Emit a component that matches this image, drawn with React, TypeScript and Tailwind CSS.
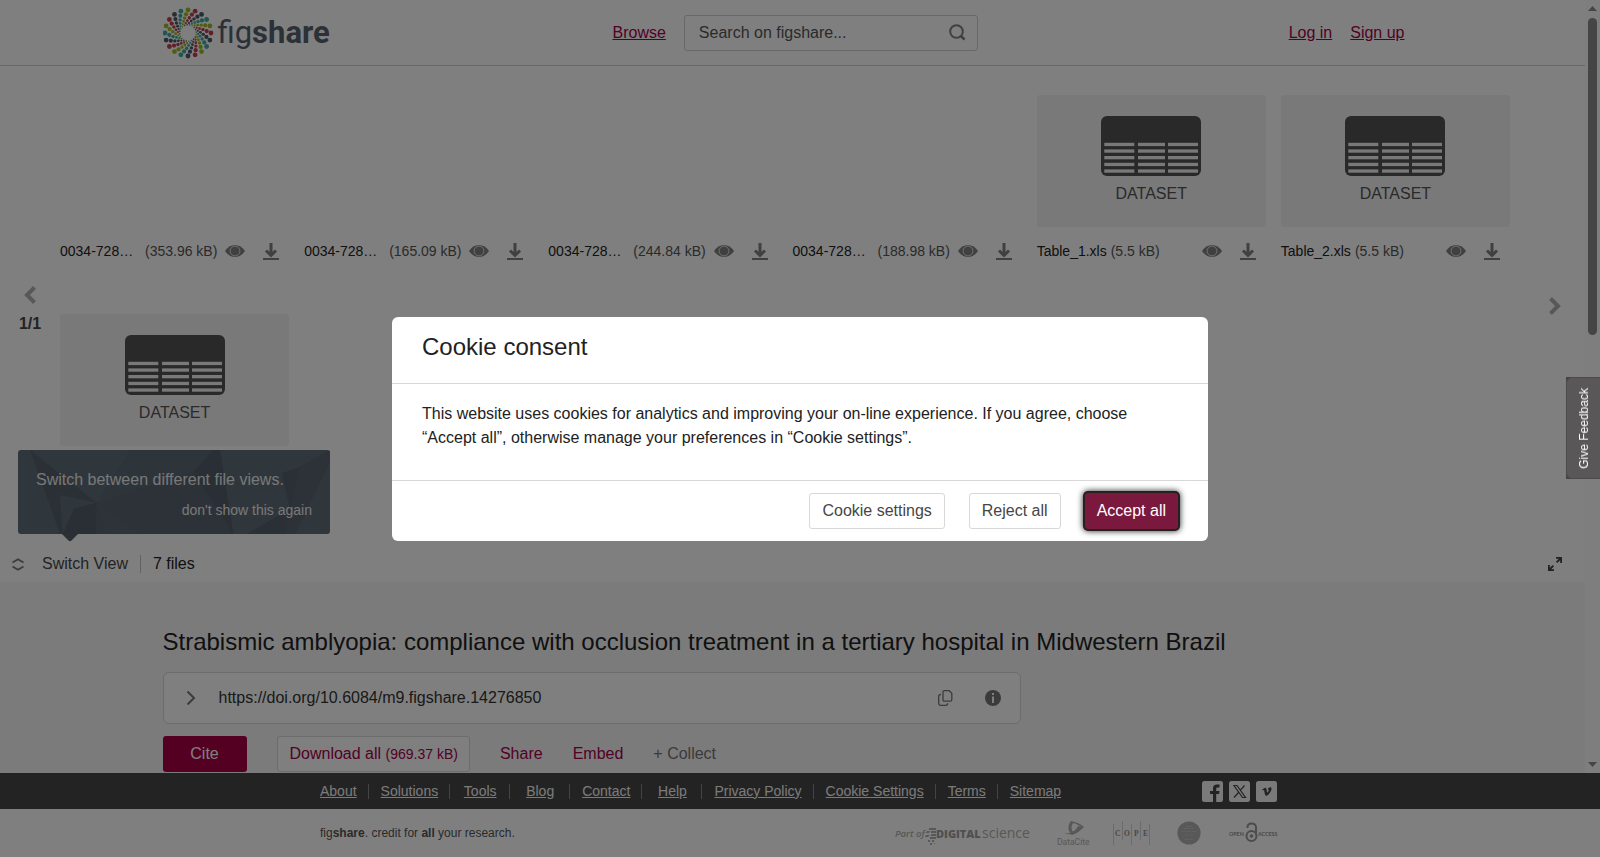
import { useState } from "react";
import type { ReactNode } from "react";

type FileItem = { name?: string; size?: string; dataset?: boolean; long?: boolean };

const files: FileItem[] = [
  { name: "0034-728…", size: "(353.96 kB)", long: true },
  { name: "0034-728…", size: "(165.09 kB)", long: true },
  { name: "0034-728…", size: "(244.84 kB)", long: true },
  { name: "0034-728…", size: "(188.98 kB)", long: true },
  { name: "Table_1.xls", size: "(5.5 kB)", dataset: true },
  { name: "Table_2.xls", size: "(5.5 kB)", dataset: true },
  { dataset: true },
];

const footerLinks = [
  "About",
  "Solutions",
  "Tools",
  "Blog",
  "Contact",
  "Help",
  "Privacy Policy",
  "Cookie Settings",
  "Terms",
  "Sitemap",
];

const dotColors = ["#9dbb1e", "#c43f50", "#4c5a6b", "#45aaa4"];
const dotRings = [
  { r: 23, size: 2.4, turn: 0 },
  { r: 18.8, size: 2.1, turn: -6 },
  { r: 15.3, size: 1.7, turn: -13 },
  { r: 12.4, size: 1.4, turn: -21 },
  { r: 10.1, size: 1.1, turn: -31 },
  { r: 8.3, size: 0.8, turn: -42 },
];

function Logo() {
  return (
    <a href="#" aria-label="figshare" className="flex items-center">
      <svg width="51" height="52" viewBox="-25 -26 51 52">
        {Array.from({ length: 20 }).map((_, i) =>
          dotRings.map((ring) => {
            const a = ((i * 18 + ring.turn - 90) * Math.PI) / 180;
            return (
              <circle
                key={`${i}-${ring.r}`}
                cx={ring.r * Math.cos(a)}
                cy={ring.r * Math.sin(a)}
                r={ring.size}
                fill={dotColors[i % 4]}
              />
            );
          })
        )}
      </svg>
      <span className="ml-1 font-['Roboto',sans-serif] text-[31px] leading-none text-[#56636f]">
        <span>fig</span>
        <span className="font-bold">share</span>
      </span>
    </a>
  );
}

function Header() {
  return (
    <header className="h-[66px] border-b border-[#d0d0d0]">
      <div className="max-w-[1260px] h-full mx-auto flex items-center pr-[18px]">
        <div className="w-[450px]">
          <Logo />
        </div>
        <a href="#" className="text-[#a6004a] underline">
          Browse
        </a>
        <form className="ml-[18px] w-[294px] h-9 flex items-center border border-[#d0d0d0] rounded-[3px] pl-3.5 pr-[11px]">
          <input
            type="text"
            aria-label="Search on figshare"
            placeholder="Search on figshare..."
            className="flex-1 min-w-0 bg-transparent focus:outline-none placeholder:text-[#555555]"
          />
          <button type="button" aria-label="Search">
            <svg width="17" height="17" viewBox="0 0 17 17" fill="none" stroke="#808080" strokeWidth="2">
              <circle cx="7.5" cy="7.5" r="6.3" />
              <path d="M12 12l3.6 3.6" strokeWidth="2.6" />
            </svg>
          </button>
        </form>
        <nav className="ml-auto flex gap-[18px] text-[#a6004a]">
          <a href="#" className="underline">
            Log in
          </a>
          <a href="#" className="underline">
            Sign up
          </a>
        </nav>
      </div>
    </header>
  );
}

function IconDataset() {
  const cols = [
    [3.3, 30],
    [37, 27],
    [67, 30],
  ];
  return (
    <svg width="100" height="60" viewBox="0 0 100 60">
      <rect width="100" height="60" rx="6" fill="#535353" />
      {[26.8, 33.4, 40, 46.8, 53.4].map((y) =>
        cols.map(([x, w]) => (
          <rect key={`${x}-${y}`} x={x} y={y} width={w} height="3.3" fill="#f3f3f3" />
        ))
      )}
    </svg>
  );
}

function IconEye() {
  return (
    <svg width="20" height="12" viewBox="0 0 20 12">
      <path d="M0 6C2.4 2.2 6 0 10 0s7.6 2.2 10 6c-2.4 3.8-6 6-10 6S2.4 9.8 0 6z" fill="#808080" />
      <circle cx="10" cy="6" r="4.9" fill="none" stroke="#f5f5f5" strokeWidth="0.8" />
    </svg>
  );
}

function IconDownload() {
  return (
    <svg width="16" height="17" viewBox="0 0 16 17" fill="none" stroke="#808080">
      <path d="M8 0v12M3 7.5l5 5 5-5" strokeWidth="3" />
      <path d="M0 16h16" strokeWidth="2" />
    </svg>
  );
}

function Arrow({ left }: { left?: boolean }) {
  return (
    <svg width="12" height="18" viewBox="0 0 12 18" fill="none" stroke="#b0b0b0" strokeWidth="4">
      <path d={left ? "M10.5 1.5L3 9l7.5 7.5" : "M1.500 1.500L9 9l-7.500 7.500"} />
    </svg>
  );
}

function FileCard({ file }: { file: FileItem }) {
  return (
    <div>
      <div
        className={
          file.dataset
            ? "h-[132px] rounded-[3px] bg-[#f3f3f3] flex flex-col items-center pt-[21px]"
            : "h-[132px]"
        }
      >
        {file.dataset && (
          <>
            <IconDataset />
            <span className="mt-1.5 text-[#555555]">DATASET</span>
          </>
        )}
      </div>
      {file.name && (
        <div className="h-12 flex items-center pr-2.5 text-sm">
          <div className="flex flex-1 gap-1">
            <span className={file.long ? "w-[81px] text-[#222222]" : "text-[#222222]"}>
              {file.name}
            </span>
            <span className="text-[#555555]">{file.size}</span>
          </div>
          <button type="button" aria-label="Preview">
            <IconEye />
          </button>
          <button type="button" aria-label="Download" className="ml-[18px]">
            <IconDownload />
          </button>
        </div>
      )}
    </div>
  );
}

function ViewTip() {
  return (
    <div className="absolute left-[18px] bottom-full mb-3 w-[312px] h-[84px]">
      <svg
        className="absolute inset-0 rounded-[3px]"
        width="312"
        height="84"
        viewBox="54 30 936 252"
        preserveAspectRatio="none"
      >
        <rect x="54" y="30" width="936" height="252" fill="#5f6d79" />
        <path d="M90 30L290 188 180 165 188 282H180z" fill="#56616c" />
        <path d="M390 30L290 188 580 95 640 30z" fill="#5b6874" />
        <path d="M290 188L580 95 640 30h20l40 252H288z" fill="#58646f" />
        <path d="M580 95L640 30h20l40 252z" fill="#545f6a" />
        <path d="M290 188L222 205l-34 77h100z" fill="#545f6a" />
        <path d="M290 188l130 94H320z" fill="#5b6773" />
        <path d="M845 100L900 80l90-50v35L885 282H740l130-75z" fill="#56616c" />
        <path d="M900 80L855 282h30L990 65V30z" fill="#596571" />
      </svg>
      <svg className="absolute left-[44px] top-full" width="16" height="8" viewBox="0 0 16 8">
        <path d="M0 0h16L9.5 6.5q-1.5 1.5-3 0z" fill="#56616c" />
      </svg>
      <div className="relative px-[18px] pt-[18px] text-[#f0f0f0]">
        <p>Switch between different file views.</p>
        <p className="mt-2 text-right text-sm">
          <button type="button">don't show this again</button>
        </p>
      </div>
    </div>
  );
}

function Viewer() {
  return (
    <section>
      <div className="flex items-center">
        <div className="w-[60px] pt-2.5 flex flex-col items-center gap-2">
          <button type="button" aria-label="Previous">
            <Arrow left />
          </button>
          <span className="font-bold text-[#464646]">1/1</span>
        </div>
        <div className="flex-1 grid grid-cols-6 gap-x-[15px] gap-y-[39px] pt-[29px] pb-[100px]">
          {files.map((file, i) => (
            <FileCard key={i} file={file} />
          ))}
        </div>
        <div className="w-[75px] flex justify-center pl-[15px]">
          <button type="button" aria-label="Next">
            <Arrow />
          </button>
        </div>
      </div>
      <div className="relative h-9 flex items-center pl-3 pr-[23px]">
        <ViewTip />
        <button type="button" className="flex items-center text-[#464646]">
          <svg width="12" height="13" viewBox="0 0 12 13" fill="none" stroke="#777777" strokeWidth="1.7">
            <path d="M0.5 4.5L6 1.2l5.5 3.3M0.500 8.500L6 11.800l5.500-3.300" />
          </svg>
          <span className="ml-[18px]">Switch View</span>
        </button>
        <span className="ml-3 mr-3 w-px h-[18px] bg-[#c4c4c4]" />
        <span className="text-[#222222]">7 files</span>
        <button type="button" aria-label="Fullscreen" className="ml-auto">
          <svg width="14" height="14" viewBox="0 0 14 14" fill="#464646">
            <path d="M8 0h6v6h-1.8V3.200L9.300 6.100 7.900 4.700 10.800 1.800H8z" />
            <path d="M10 .5h3.500V4z" />
            <path d="M6 14H0V8h1.800v2.800L4.700 7.900l1.400 1.400-2.900 2.900H6z" />
            <path d="M4 13.500H.5V10z" />
          </svg>
        </button>
      </div>
    </section>
  );
}

function Details() {
  return (
    <section className="flex-1 bg-[#f7f7f7]">
      <div className="max-w-[1260px] mx-auto pt-11">
        <h1 className="text-2xl leading-8 text-[#222222]">
          Strabismic amblyopia: compliance with occlusion treatment in a tertiary hospital in
          Midwestern Brazil
        </h1>
        <div className="mt-[14px] max-w-[858px] h-[52px] bg-white border border-[#d8d8d8] rounded-md flex items-center pl-[22px] pr-[19px]">
          <button type="button" aria-label="Expand">
            <svg width="10" height="16" viewBox="0 0 10 16" fill="none" stroke="#777777" strokeWidth="2">
              <path d="M1.5 1.5L8 8l-6.5 6.5" />
            </svg>
          </button>
          <span className="ml-[23px] text-[#333333]">https://doi.org/10.6084/m9.figshare.14276850</span>
          <button type="button" aria-label="Copy" className="ml-auto">
            <svg width="15" height="16" viewBox="0 0 15 16" fill="none" stroke="#777777" strokeWidth="1.3">
              <path d="M6.500 0.700h4.700l2.600 2.600v6.400q0 1.500-1.500 1.500H6.500q-1.500 0-1.500-1.500V2.200q0-1.500 1.500-1.500z" />
              <path d="M3 4.500q-2.300 0-2.300 2v7q0 1.800 1.800 1.800h5.200q2 0 2-2" />
            </svg>
          </button>
          <button type="button" aria-label="Info" className="ml-8">
            <svg width="16" height="16" viewBox="0 0 16 16">
              <circle cx="8" cy="8" r="8" fill="#777777" />
              <path d="M7 3h2v2H7zM7 6.500h2V13H7z" fill="#fff" />
            </svg>
          </button>
        </div>
        <div className="mt-3 flex items-center text-[#a6004a]">
          <button type="button" className="w-[84px] h-9 rounded-[3px] bg-[#a60046] text-white">
            Cite
          </button>
          <button
            type="button"
            className="ml-[30px] h-9 pl-3 pr-[11px] rounded-[3px] bg-white border border-[#d8d8d8]"
          >
            Download all <span className="text-sm">(969.37 kB)</span>
          </button>
          <button type="button" className="ml-[30px]">
            Share
          </button>
          <button type="button" className="ml-[30px]">
            Embed
          </button>
          <button type="button" className="ml-[30px] text-[#757575]">
            + Collect
          </button>
        </div>
      </div>
    </section>
  );
}

function Scrollbar() {
  return (
    <div className="w-[15px] bg-[#fcfcfc] flex flex-col items-center py-1.5">
      <svg width="9" height="5" viewBox="0 0 9 5">
        <path d="M4.5 0L9 5H0z" fill="#8b8b8b" />
      </svg>
      <div className="mt-[7px] w-[9px] h-[317px] rounded-full bg-[#8b8b8b]" />
      <svg className="mt-auto" width="9" height="5" viewBox="0 0 9 5">
        <path d="M4.5 5L9 0H0z" fill="#8b8b8b" />
      </svg>
    </div>
  );
}

function SocialLink({ label, children }: { label: string; children: ReactNode }) {
  return (
    <a href="#" aria-label={label}>
      <svg width="21" height="21" viewBox="0 0 21 21">
        <rect width="21" height="21" rx="2.5" fill="#f5f5f5" />
        {children}
      </svg>
    </a>
  );
}

function PartnerLogos() {
  return (
    <div className="flex items-center text-[#b0b0b0]">
      <svg width="138" height="28" viewBox="0 0 138 28" fill="currentColor">
        <text x="0" y="18" fontFamily="Open Sans" fontSize="9.5" fontStyle="italic" fontWeight="600">
          Part of
        </text>
        <path d="M34 9h7v2h-7zM36 12h5v2h-5zM36 15h5v2h-5zM32 12h3l-1 2h-3zM31 16h4l-2 2h-3zM35 18h6v2h-6zM33 21h2v2h-2zM37 21h2v2h-2zM35 24h2v2h-2zM39 24h1v1h-1z" />
        <g fill="#a0a0a0">
          <text x="41" y="19" fontFamily="Open Sans" fontSize="11" fontWeight="800">
            DIGITAL
          </text>
        </g>
        <text x="87" y="19" fontFamily="Open Sans" fontSize="14">
          science
        </text>
      </svg>
      <svg className="ml-6" width="36" height="28" viewBox="0 0 36 28" fill="currentColor">
        <path
          d="M14 2c-4 5-3 10 1 14 6-2 10-6 12-8-3-3-8-5-13-6zm2 2c4 1 6 2 8 4-2 2-5 4-8 5-2-3-2-6 0-9z"
          fillRule="evenodd"
        />
        <path d="M7 14c6 1 11-1 14-7l4 1c-3 7-11 9-18 6z" />
        <text x="0" y="26" fontFamily="Roboto" fontSize="8.5">
          DataCite
        </text>
      </svg>
      <svg className="ml-5" width="37" height="26" viewBox="0 0 37 26" fill="currentColor">
        <path d="M0 4h1v21H0zM9 1h1v19H9zM18 4h1v21h-1zM27 1h1v19h-1zM36 4h1v21h-1z" opacity="0.5" />
        <g fill="#909090">
          <text y="16" fontFamily="Liberation Serif" fontSize="7.5" fontWeight="700">
            <tspan x="2">C</tspan>
            <tspan x="11">O</tspan>
            <tspan x="21">P</tspan>
            <tspan x="30">E</tspan>
          </text>
        </g>
      </svg>
      <svg className="ml-[27px]" width="24" height="24" viewBox="0 0 24 24">
        <circle cx="12" cy="12" r="11.6" fill="currentColor" />
        <path
          d="M9 5.500h6M7 7.500h10M5 10.500h14M8 14h8M8 18.500h8"
          stroke="#cccccc"
          strokeWidth="0.9"
          strokeDasharray="1.6 0.9"
        />
      </svg>
      <svg className="ml-7" width="51" height="24" viewBox="0 0 51 24" fill="#999999">
        <text x="0" y="15" fontFamily="Lato" fontSize="5.3" fontWeight="900">
          OPEN
        </text>
        <text x="29" y="15" fontFamily="Lato" fontSize="5.3" fontWeight="900">
          ACCESS
        </text>
        <g fill="none" stroke="#999999" strokeWidth="2">
          <circle cx="22.5" cy="15" r="5" />
          <path d="M18.500 7V6q0-3.500 4-3.500T27 6v8" />
        </g>
        <circle cx="22.5" cy="15" r="1.8" />
      </svg>
    </div>
  );
}

function Footer() {
  return (
    <footer>
      <div className="bg-[#464646]">
        <div className="max-w-[960px] h-9 mx-auto flex items-center text-sm text-[#f5f5f5]">
          <ul className="flex">
            {footerLinks.map((link, i) => (
              <li
                key={link}
                className={
                  i === 0
                    ? "h-[15px] pr-[11px] border-r border-[#868686] leading-[15px]"
                    : i === footerLinks.length - 1
                      ? "h-[15px] pl-3 leading-[15px]"
                      : "h-[15px] min-w-[60px] pl-3 pr-[11px] border-r border-[#868686] text-center leading-[15px]"
                }
              >
                <a href="#" className="underline">
                  {link}
                </a>
              </li>
            ))}
          </ul>
          <div className="ml-auto mr-[3px] flex gap-1.5">
            <SocialLink label="Facebook">
              <path d="M11 21v-8H8v-3h3V7.500Q11 3.600 15 3.600h2.500v3h-2q-1.300 0-1.300 1.400v2h3.300l-.4 3h-2.900v8z" fill="#464646" />
            </SocialLink>
            <SocialLink label="X">
              <path d="M5 4.500h3l8.500 12h-3zM15.500 4.500L11.200 9.300M9.500 11.500L5 16.500" fill="none" stroke="#464646" strokeWidth="1.2" />
            </SocialLink>
            <SocialLink label="Vimeo">
              <path
                d="M6 8.800l2.600-1.900c1.100-.5 1.700.3 1.900 1.500.4 2 .6 3.200 1 3.200.3 0 1.300-1.600 1.300-2.500 0-.7-.6-.7-1.100-.5.9-2.700 3.800-3 3.800-.8 0 2.600-3.500 7-5 7-1.700 0-1.800-3.300-2.400-5.300-.2-.8-.6-.5-1.400 0z"
                fill="#464646"
              />
            </SocialLink>
          </div>
        </div>
      </div>
      <div className="bg-white">
        <div className="max-w-[960px] h-12 mx-auto flex items-center justify-between text-xs text-[#555555]">
          <p>
            fig<b>share</b>. credit for <b>all</b> your research.
          </p>
          <PartnerLogos />
        </div>
      </div>
    </footer>
  );
}

function CookieDialog({ onClose }: { onClose: () => void }) {
  return (
    <div className="fixed inset-0 bg-black/50 flex items-center justify-center">
      <div
        role="dialog"
        aria-labelledby="cookie-title"
        className="w-[816px] bg-white rounded-md text-[#222222]"
      >
        <div className="px-[30px] pt-3.5 pb-5 border-b border-[#d8d8d8]">
          <h2 id="cookie-title" className="text-2xl leading-8">
            Cookie consent
          </h2>
        </div>
        <div className="px-[30px] pt-[18px] pb-[30px] border-b border-[#d8d8d8]">
          <p>
            This website uses cookies for analytics and improving your on-line experience. If you
            agree, choose “Accept all”, otherwise manage your preferences in “Cookie settings”.
          </p>
        </div>
        <div className="flex justify-end gap-6 px-[30px] py-3">
          <button
            type="button"
            className="h-9 px-3 rounded-[3px] border border-[#d8d8d8] text-[#464646]"
          >
            Cookie settings
          </button>
          <button
            type="button"
            onClick={onClose}
            className="h-9 px-3 rounded-[3px] border border-[#d8d8d8] text-[#464646]"
          >
            Reject all
          </button>
          <button
            type="button"
            onClick={onClose}
            className="h-9 px-3 rounded-[3px] bg-[#7b183d] text-white shadow-[0_0_0_2px_#222222,0_0_6px_2px_#222222]"
          >
            Accept all
          </button>
        </div>
      </div>
    </div>
  );
}

export default function App() {
  const [showCookies, setShowCookies] = useState(true);

  return (
    <div className="h-screen flex flex-col bg-white text-base font-['Liberation_Sans',Arial,sans-serif]">
      <div className="flex-1 min-h-0 flex">
        <main className="flex-1 min-w-0 flex flex-col overflow-hidden">
          <Header />
          <Viewer />
          <Details />
        </main>
        <Scrollbar />
      </div>
      <Footer />
      {showCookies && <CookieDialog onClose={() => setShowCookies(false)} />}
      <div className="fixed right-0 top-[377px] bg-[#444444]">
        <button
          type="button"
          className="w-[34px] h-[102px] flex items-center justify-center rounded-l-md border border-r-0 border-[#4c4a4a] bg-[#5a5758] text-xs text-white"
        >
          <span className="[writing-mode:vertical-rl] rotate-180">Give Feedback</span>
        </button>
      </div>
    </div>
  );
}
